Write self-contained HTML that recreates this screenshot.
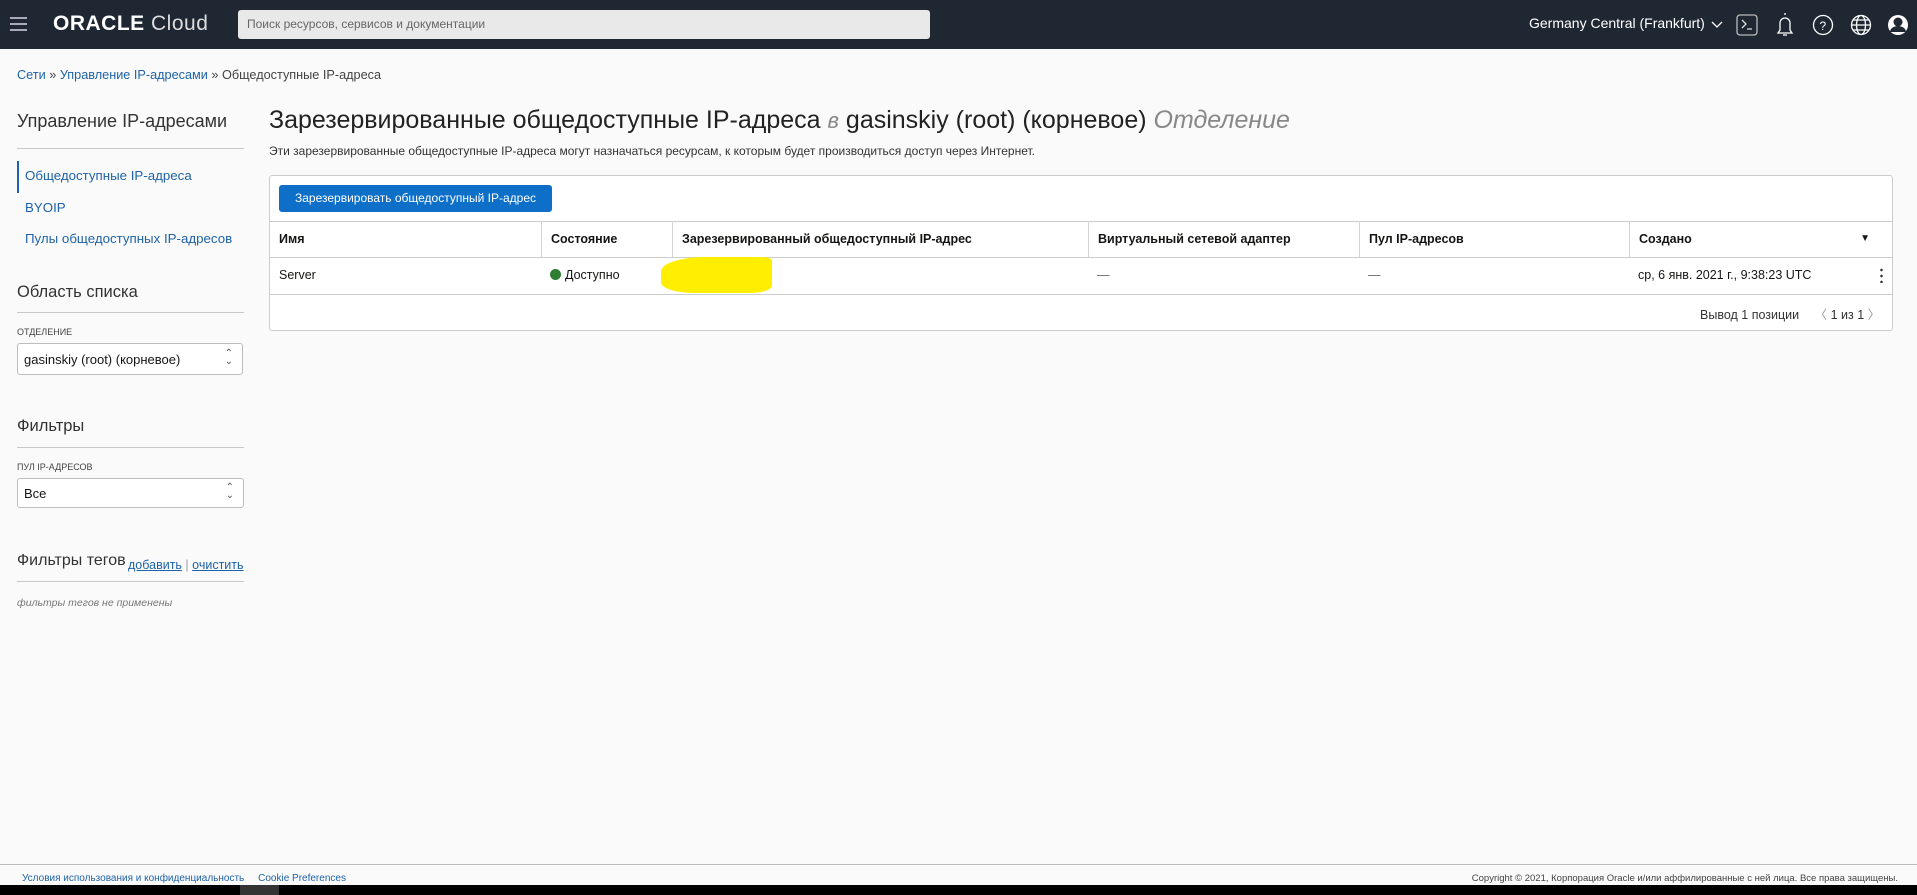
<!DOCTYPE html>
<html><head><meta charset="utf-8"><style>
*{box-sizing:border-box;margin:0;padding:0}
body{width:1917px;height:895px;overflow:hidden;background:#fafafa;font-family:"Liberation Sans",Arial,sans-serif;color:#161513;position:relative}
.abs{position:absolute}
.hdr{left:0;top:0;width:1917px;height:49px;background:#1f2733}
a,.lnk{color:#1e62a8;text-decoration:none}
.line{background:#c8c8c8;height:1px}
.sel{border:1px solid #bdbdbd;border-radius:3px;background:#fff;font-size:13px;padding-left:6px;display:flex;align-items:center}
.th{position:absolute;top:221px;height:36px;border-left:1px solid #d4d4d4;font-size:12.5px;font-weight:bold;line-height:36px;padding-left:9px}
.td{position:absolute;top:257px;height:37px;font-size:12.5px;line-height:37px;padding-left:9px}
</style></head><body>
<div class="abs hdr"></div>
<div class="abs" style="left:10px;top:17px;width:17px;height:14px;border-top:2px solid #aab;border-bottom:2px solid #aab"><div style="margin-top:4px;height:2px;background:#aab"></div></div>
<div class="abs" style="left:53px;top:12px;color:#fff;font-size:21px;letter-spacing:0.5px"><b style="font-weight:bold;letter-spacing:0.5px">ORACLE</b> <span style="color:#ddd">Cloud</span></div>
<div class="abs" style="left:238px;top:10px;width:692px;height:29px;background:#e9e9e9;border-radius:3px;font-size:12px;color:#666;line-height:29px;padding-left:9px">Поиск ресурсов, сервисов и документации</div>
<div class="abs" style="left:1529px;top:15px;color:#fff;font-size:14px">Germany Central (Frankfurt)</div>
<svg class="abs" style="left:1700px;top:5px" width="217" height="40" viewBox="0 0 217 40" fill="none" stroke="#fff" stroke-width="1.3">
<path d="M12 17 l5 5 l5-5"/>
<rect x="37" y="10" width="20" height="20" rx="3" stroke="#bbb"/><path d="M42 15 l4 4 l-4 4 M47 24 h5" stroke="#ddd"/>
<path d="M78 28 h14 l-2-3 v-7 a5 5 0 0 0 -10 0 v7 z M83 30 h4 M85 8 v2"/>
<circle cx="123" cy="20" r="9.5"/><text x="119.5" y="25" fill="#fff" stroke="none" font-size="12" font-family="Liberation Sans">?</text>
<circle cx="161" cy="20" r="9.5"/><ellipse cx="161" cy="20" rx="4.5" ry="9.5"/><path d="M151.5 20 h19 M153 15 h16 M153 25 h16"/>
<circle cx="198" cy="20" r="10" fill="#fff" stroke="none"/><circle cx="198" cy="17" r="4.5" fill="#1f2733" stroke="none"/><path d="M190 27 a8 6 0 0 1 16 0" fill="#1f2733" stroke="none"/>
</svg>
<div class="abs" style="left:17px;top:68px;font-size:12.7px;color:#444"><a>Сети</a> » <a>Управление IP-адресами</a> » Общедоступные IP-адреса</div>
<!-- sidebar -->
<div class="abs" style="left:17px;top:111px;font-size:18px;color:#333">Управление IP-адресами</div>
<div class="abs line" style="left:17px;top:148px;width:227px"></div>
<div class="abs" style="left:17px;top:161px;width:2px;height:32px;background:#1e62a8"></div>
<div class="abs" style="left:25px;top:168px;font-size:13.3px;color:#1e62a8">Общедоступные IP-адреса</div>
<div class="abs" style="left:25px;top:200px;font-size:13.3px;color:#1e62a8">BYOIP</div>
<div class="abs" style="left:25px;top:231px;font-size:13.3px;color:#1e62a8">Пулы общедоступных IP-адресов</div>
<div class="abs" style="left:17px;top:283px;font-size:16.5px;color:#333">Область списка</div>
<div class="abs line" style="left:17px;top:312px;width:227px"></div>
<div class="abs" style="left:17px;top:327px;font-size:9px;color:#444">ОТДЕЛЕНИЕ</div>
<div class="abs sel" style="left:17px;top:343px;width:226px;height:32px">gasinskiy (root) (корневое)<span style="position:absolute;right:9px;top:6px;font-size:10px;line-height:8px;color:#555">&#8963;<br>&#8964;</span></div>
<div class="abs" style="left:17px;top:417px;font-size:16.5px;color:#333">Фильтры</div>
<div class="abs line" style="left:17px;top:447px;width:227px"></div>
<div class="abs" style="left:17px;top:462px;font-size:9px;color:#444">ПУЛ IP-АДРЕСОВ</div>
<div class="abs sel" style="left:17px;top:478px;width:227px;height:30px">Все<span style="position:absolute;right:9px;top:5px;font-size:10px;line-height:8px;color:#555">&#8963;<br>&#8964;</span></div>
<div class="abs" style="left:17px;top:552px;font-size:16px;color:#333">Фильтры тегов</div>
<div class="abs" style="left:128px;top:558px;font-size:12.5px;color:#999"><span class="lnk" style="text-decoration:underline">добавить</span> | <span class="lnk" style="text-decoration:underline">очистить</span></div>
<div class="abs line" style="left:17px;top:581px;width:227px"></div>
<div class="abs" style="left:17px;top:597px;font-size:10.5px;color:#777;font-style:italic">фильтры тегов не применены</div>
<!-- main -->
<div class="abs" style="left:269px;top:106px;font-size:25px;color:#222;white-space:nowrap">Зарезервированные общедоступные IP-адреса <i style="color:#888;font-size:22px">в</i> gasinskiy (root) (корневое) <i style="color:#888">Отделение</i></div>
<div class="abs" style="left:269px;top:144px;font-size:12px;color:#333">Эти зарезервированные общедоступные IP-адреса могут назначаться ресурсам, к которым будет производиться доступ через Интернет.</div>
<div class="abs" style="left:269px;top:175px;width:1624px;height:156px;border:1px solid #ccc;border-radius:3px;background:#fff"></div>
<div class="abs" style="left:279px;top:185px;width:273px;height:27px;background:#0d6fc8;border-radius:3px;color:#fff;font-size:12px;line-height:27px;text-align:center">Зарезервировать общедоступный IP-адрес</div>
<div class="abs" style="left:270px;top:221px;width:1622px;height:1px;background:#ccc"></div>
<div class="abs" style="left:270px;top:257px;width:1622px;height:1px;background:#ccc"></div>
<div class="abs" style="left:270px;top:294px;width:1622px;height:1px;background:#ccc"></div>
<div class="th" style="left:270px;border-left:none">Имя</div>
<div class="th" style="left:541px;width:131px">Состояние</div>
<div class="th" style="left:672px;width:416px">Зарезервированный общедоступный IP-адрес</div>
<div class="th" style="left:1088px;width:271px">Виртуальный сетевой адаптер</div>
<div class="th" style="left:1359px;width:270px">Пул IP-адресов</div>
<div class="th" style="left:1629px;width:263px">Создано<span style="position:absolute;right:22px;font-size:10px">▼</span></div>
<div class="td" style="left:270px">Server</div>
<div class="td" style="left:541px"><span style="display:inline-block;width:11px;height:11px;border-radius:50%;background:#2e7d32;vertical-align:-1px;margin-right:4px"></span>Доступно</div>
<div class="abs" style="left:661px;top:257px;width:111px;height:36px;background:#ffee00;border-radius:40% 10% 20% 30%"></div>
<div class="td" style="left:1088px;color:#666">—</div>
<div class="td" style="left:1359px;color:#666">—</div>
<div class="td" style="left:1629px">ср, 6 янв. 2021 г., 9:38:23 UTC</div>
<div class="abs" style="left:1880px;top:267px;width:3px;height:16px;background:radial-gradient(circle,#333 1.2px,transparent 1.4px) 0 0/3px 6px"></div>
<div class="abs" style="left:1700px;top:304px;font-size:12.5px;color:#333">Вывод 1 позиции <span style="color:#999;margin-left:12px">〈</span> 1 из 1 <span style="color:#999">〉</span></div>
<!-- footer -->
<div class="abs" style="left:0;top:864px;width:1917px;height:1px;background:#bbb"></div>
<div class="abs" style="left:22px;top:873px;font-size:10px;color:#1e62a8">Условия использования и конфиденциальность &nbsp;&nbsp;&nbsp; Cookie Preferences</div>
<div class="abs" style="right:19px;top:873px;font-size:9.5px;color:#444">Copyright © 2021, Корпорация Oracle и/или аффилированные с ней лица. Все права защищены.</div>
<div class="abs" style="left:0;top:885px;width:1917px;height:10px;background:#000"></div>
<div class="abs" style="left:240px;top:885px;width:39px;height:10px;background:#333"></div>
</body></html>
